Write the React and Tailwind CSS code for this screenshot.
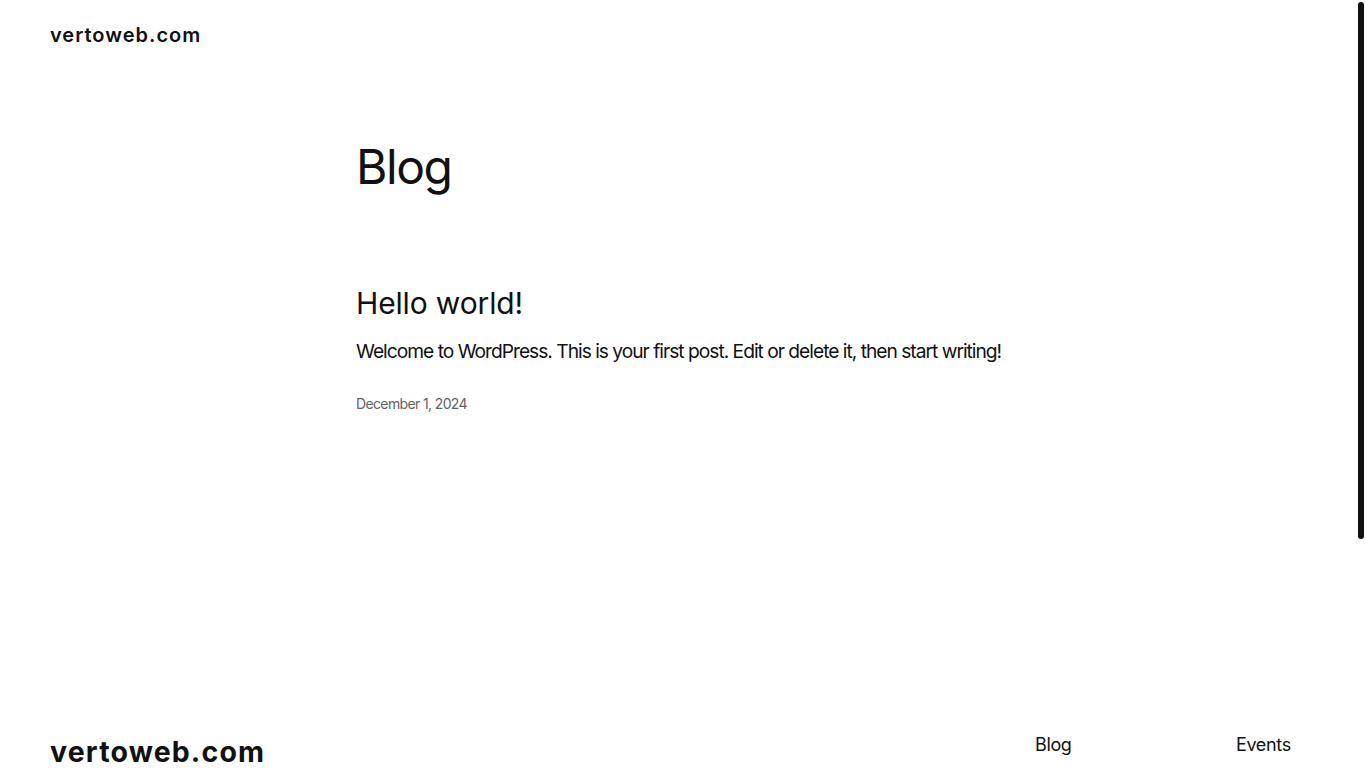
import React from 'react';

const FONT = { fontFamily: 'Inter, "Noto Sans", sans-serif' };

export default function App() {
    return (
        <div className="relative min-h-screen bg-white pr-[10px] text-[#111111]" style={FONT}>
            <div className="fixed right-[2px] top-[2px] h-[537px] w-[6px] rounded-full bg-[#111111]" />

            <header className="px-[50px] pt-[21px]">
                <p className="text-[20px] font-semibold leading-[1.4] tracking-[0.05em]">vertoweb.com</p>
            </header>

            <main className="mx-auto w-[644px] pt-[89px]">
                <h1 className="text-[48px] font-normal leading-[1.2] tracking-[-0.03em]">Blog</h1>

                <article className="pt-[89px]">
                    <h2 className="text-[30px] font-normal leading-[1.2] tracking-[-0.005em]">Hello world!</h2>
                    <p className="mt-[16px] whitespace-nowrap text-[19.2px] leading-[1.55] tracking-[-0.052em]">
                        Welcome to WordPress. This is your first post. Edit or delete it, then start writing!
                    </p>
                    <p className="mt-[28px] text-[14px] leading-[1.4] tracking-[-0.045em] text-[#636363]">December 1, 2024</p>
                </article>
            </main>

            <footer className="flex items-start justify-between px-[50px] pt-[318px] pb-[40px]">
                <p className="text-[28.5px] font-bold leading-[1.4] tracking-[0.04em]">vertoweb.com</p>
                <nav className="flex text-[18px] leading-[1.4] tracking-[-0.02em]">
                    <a href="#" className="w-[201px]">Blog</a>
                    <a href="#" className="w-[70px]">Events</a>
                </nav>
            </footer>
        </div>
    );
}
